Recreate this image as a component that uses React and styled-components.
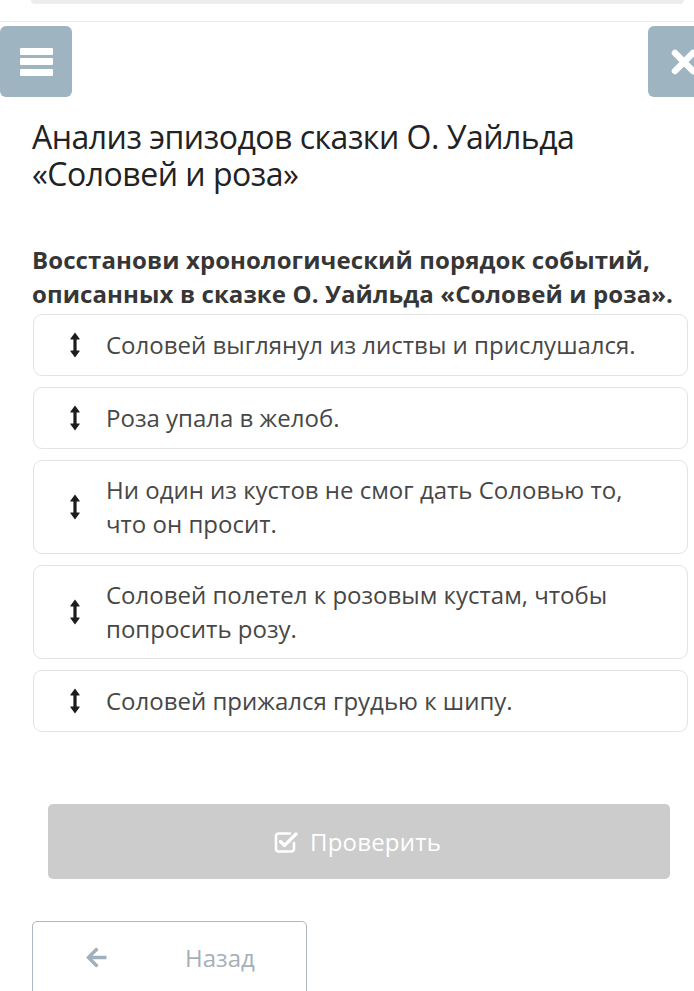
import React from "react";
import styled, { createGlobalStyle } from "styled-components";
import { FaArrowLeft } from "react-icons/fa";

const Global = createGlobalStyle`
  html, body { margin: 0; padding: 0; background: #fff; overflow: hidden; }
  body { font-family: "Open Sans", "Noto Sans", sans-serif; width: 694px; }
  * { box-sizing: border-box; }
`;

const Page = styled.div`
  width: 694px;
  height: 991px;
  overflow: hidden;
`;

const TopStrip = styled.div`
  height: 22px;
  border-bottom: 1px solid #ebebeb;
  padding: 0 10px 0 31px;
`;

const TopBarEdge = styled.div`
  height: 4px;
  background: #eceeee;
  border-radius: 0 0 10px 10px;
`;

const Header = styled.div`
  display: flex;
  justify-content: space-between;
  margin-top: 4px;
  margin-right: -26px;
`;

const IconButton = styled.div`
  width: 72px;
  height: 71px;
  background: #9fb4c1;
  border-radius: 6px;
  display: flex;
  align-items: center;
  justify-content: center;
  color: #fff;
`;

const Burger = styled.div`
  display: flex;
  flex-direction: column;
  gap: 3.5px;
  & > span {
    display: block;
    width: 33px;
    height: 7px;
    background: #fff;
    border-radius: 1px;
  }
`;

const Content = styled.div`
  padding: 0 6px 0 32px;
`;

const Title = styled.h1`
  margin: 21px 0 0;
  font-weight: 400;
  font-size: 32px;
  line-height: 37px;
  color: #222;
  letter-spacing: -0.5px;
`;

const Instruction = styled.p`
  margin: 51px 0 0;
  font-weight: 700;
  font-size: 24px;
  line-height: 34px;
  color: #363636;
  letter-spacing: 0.1px;
`;

const List = styled.div`
  display: flex;
  flex-direction: column;
  gap: 11px;
  margin-top: 3px;
  margin-left: 1px;
`;

const Card = styled.div`
  display: flex;
  align-items: center;
  min-height: 62px;
  padding: 12px 30px 12px 36px;
  border: 1.5px solid #e3e3e3;
  border-radius: 9px;
  background: #fff;
`;

const Handle = styled.svg`
  flex: none;
  width: 10px;
  height: 26px;
  margin-right: 26px;
  color: #1c1c1c;
`;

const ItemText = styled.div`
  font-size: 24px;
  line-height: 34px;
  color: #474747;
`;

const CheckButton = styled.div`
  margin: 72px 18px 0 16px;
  height: 75px;
  background: #cccccc;
  border-radius: 5px;
  display: flex;
  align-items: center;
  justify-content: center;
  gap: 12px;
  color: #fff;
  font-size: 24px;
  letter-spacing: 0.2px;
  padding-right: 4px;
`;

const BackButton = styled.div`
  margin-top: 42px;
  width: 275px;
  height: 80px;
  border: 1.5px solid #a9b8c4;
  border-radius: 5px;
  display: flex;
  align-items: center;
  padding: 0 0 8px 52px;
  color: #a7afb6;
  font-size: 24px;
`;

const BackLabel = styled.span`
  margin-left: 77px;
`;

function DragHandle() {
  return (
    <Handle viewBox="0 0 10 26">
      <path
        d="M5 0.5 L9.6 6.8 Q10 7.5 9.2 7.5 H6.6 V18.5 H9.2 Q10 18.5 9.6 19.2 L5 25.5 L0.4 19.2 Q0 18.5 0.8 18.5 H3.4 V7.5 H0.8 Q0 7.5 0.4 6.8 Z"
        fill="currentColor"
      />
    </Handle>
  );
}

function CheckSquareIcon() {
  return (
    <svg width="25" height="24" viewBox="0 0 25 24" fill="none">
      <path
        d="M17 3.5H5.5A2.5 2.5 0 0 0 3 6v13a2.5 2.5 0 0 0 2.5 2.5h13A2.5 2.5 0 0 0 21 19v-6"
        stroke="#fff"
        strokeWidth="2.6"
        strokeLinecap="round"
      />
      <path d="M7.5 11.5l4 4L23 4" stroke="#fff" strokeWidth="3.2" strokeLinecap="round" strokeLinejoin="round" />
    </svg>
  );
}

const items = [
  "Соловей выглянул из листвы и прислушался.",
  "Роза упала в желоб.",
  "Ни один из кустов не смог дать Соловью то, что он просит.",
  "Соловей полетел к розовым кустам, чтобы попросить розу.",
  "Соловей прижался грудью к шипу.",
];

export default function App() {
  return (
    <Page>
      <Global />
      <TopStrip>
        <TopBarEdge />
      </TopStrip>
      <Header>
        <IconButton>
          <Burger>
            <span />
            <span />
            <span />
          </Burger>
        </IconButton>
        <IconButton>
          <svg width="28" height="28" viewBox="0 0 28 28">
            <path d="M5 5 L23 23 M23 5 L5 23" stroke="#fff" strokeWidth="6.5" strokeLinecap="round" />
          </svg>
        </IconButton>
      </Header>
      <Content>
        <Title>
          Анализ эпизодов сказки О. Уайльда
          <br />
          «Соловей и роза»
        </Title>
        <Instruction>
          Восстанови хронологический порядок событий, описанных в сказке О. Уайльда «Соловей и роза».
        </Instruction>
        <List>
          {items.map((t) => (
            <Card key={t}>
              <DragHandle />
              <ItemText>{t}</ItemText>
            </Card>
          ))}
        </List>
        <CheckButton>
          <CheckSquareIcon />
          Проверить
        </CheckButton>
        <BackButton>
          <FaArrowLeft size={23} color="#9fb1bf" />
          <BackLabel>Назад</BackLabel>
        </BackButton>
      </Content>
    </Page>
  );
}
